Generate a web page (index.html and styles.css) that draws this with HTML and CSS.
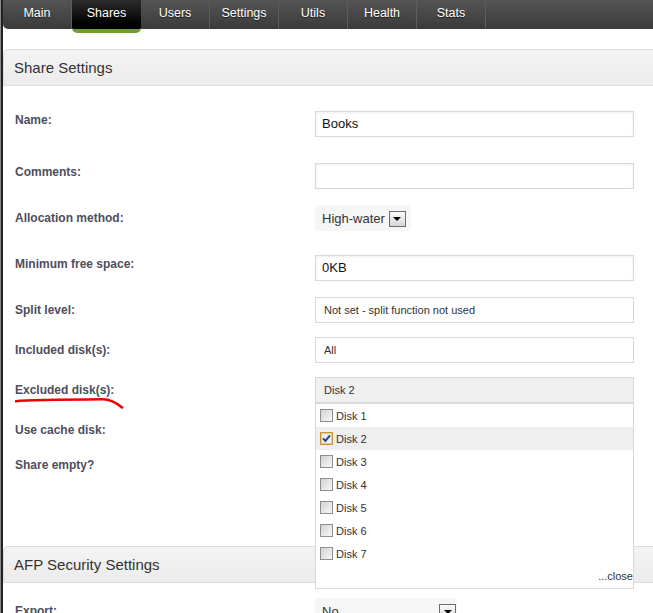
FILE: index.html
```html
<!DOCTYPE html>
<html lang="en">
<head>
<meta charset="utf-8">
<title>Share Settings</title>
<link rel="stylesheet" href="styles.css">
</head>
<body>
<nav class="nav">
  <a class="tab first">Main</a>
  <a class="tab active">Shares</a>
  <a class="tab">Users</a>
  <a class="tab">Settings</a>
  <a class="tab">Utils</a>
  <a class="tab">Health</a>
  <a class="tab">Stats</a>
</nav>

<section class="panel panel-first">
  <div class="panel-head">Share Settings</div>
  <div class="panel-body body-share">
    <div class="row row-name">
      <div class="lbl lbl-text">Name:</div>
      <div class="ctl"><div class="input">Books</div></div>
    </div>
    <div class="row row-comments">
      <div class="lbl lbl-text">Comments:</div>
      <div class="ctl"><div class="input"></div></div>
    </div>
    <div class="row row-alloc">
      <div class="lbl">Allocation method:</div>
      <div class="ctl"><div class="select"><span>High-water</span><span class="select-btn"></span></div></div>
    </div>
    <div class="row row-min">
      <div class="lbl lbl-text">Minimum free space:</div>
      <div class="ctl"><div class="input">0KB</div></div>
    </div>
    <div class="row">
      <div class="lbl">Split level:</div>
      <div class="ctl"><div class="pick">Not set - split function not used</div></div>
    </div>
    <div class="row">
      <div class="lbl">Included disk(s):</div>
      <div class="ctl"><div class="pick">All</div></div>
    </div>
    <div class="row">
      <div class="lbl">Excluded disk(s):
        <svg class="scribble" width="112" height="16" viewBox="0 0 112 16">
          <path d="M1 6.2 C 12 5, 40 4.6, 88 4.3 C 96 4.3, 101 7.5, 107 12.5" fill="none" stroke="#ee0000" stroke-width="2.6" stroke-linecap="round"/>
        </svg>
      </div>
      <div class="ctl">
        <div class="dropdown">
          <div class="dd-head">Disk 2</div>
          <div class="dd-list">
            <div class="dd-item"><span class="cb"></span><span>Disk 1</span></div>
            <div class="dd-item on"><span class="cb checked"><svg width="9" height="9" viewBox="0 0 9 9"><path d="M1 4.4 L3.4 7 L8 1.3" fill="none" stroke="#23409c" stroke-width="2"/></svg></span><span>Disk 2</span></div>
            <div class="dd-item"><span class="cb"></span><span>Disk 3</span></div>
            <div class="dd-item"><span class="cb"></span><span>Disk 4</span></div>
            <div class="dd-item"><span class="cb"></span><span>Disk 5</span></div>
            <div class="dd-item"><span class="cb"></span><span>Disk 6</span></div>
            <div class="dd-item"><span class="cb"></span><span>Disk 7</span></div>
            <div class="dd-close">...close</div>
          </div>
        </div>
      </div>
    </div>
    <div class="row row-cache">
      <div class="lbl">Use cache disk:</div>
      <div class="ctl"></div>
    </div>
    <div class="row row-empty">
      <div class="lbl">Share empty?</div>
      <div class="ctl"></div>
    </div>
  </div>
</section>

<section class="panel">
  <div class="panel-head">AFP Security Settings</div>
  <div class="panel-body body-afp">
    <div class="row">
      <div class="lbl">Export:</div>
      <div class="ctl"><div class="select select-wide"><span>No</span><span class="select-btn"></span></div></div>
    </div>
  </div>
</section>
</body>
</html>
```
FILE: styles.css
```css
* {
  box-sizing: border-box;
  margin: 0;
  padding: 0;
}

html {
  height: 100%;
  background: #fff;
  border-left: 1px solid #8a8a8a;
}

body {
  min-height: 100%;
  border-left: 2px solid #222;
  font-family: Arial, "Liberation Sans", sans-serif;
  overflow: hidden;
}

/* top navigation */
.nav {
  display: flex;
  height: 29px;
  background: linear-gradient(#555, #3a3a3a);
  border-bottom-left-radius: 5px;
}

.tab {
  flex: none;
  width: 69px;
  height: 29px;
  color: #fff;
  font-size: 12.5px;
  line-height: 26px;
  text-align: center;
  text-decoration: none;
  text-shadow: 0 1px 1px rgba(0, 0, 0, 0.6);
  border-right: 1px solid #5c5c5c;
}

.tab.first {
  border-bottom-left-radius: 5px;
}

.tab.active {
  height: 33px;
  background: linear-gradient(#2c2c2c, #000 85%);
  border-right: none;
  border-bottom: 4px solid #6f9e33;
  border-radius: 0 0 5px 5px;
}

/* panels */
.panel-first {
  margin-top: 20px;
}

.panel-head {
  height: 37px;
  padding-left: 10px;
  background: linear-gradient(#f3f3f3, #ececec);
  border: 1px solid #dcdcdc;
  border-right: none;
  border-top-left-radius: 5px;
  color: #333;
  font-size: 15px;
  line-height: 35px;
}

.panel-body {
  padding-left: 12px;
}

.body-share {
  padding-top: 25px;
}

.body-afp {
  padding-top: 15px;
}

/* form rows */
.row {
  display: flex;
  align-items: flex-start;
  height: 40px;
}

.row-name { height: 52px; }
.row-comments { height: 42px; }
.row-alloc { height: 50px; }
.row-min { height: 42px; }
.row-cache { height: 35px; }
.row-empty { height: 94px; }

.lbl {
  position: relative;
  flex: none;
  width: 300px;
  padding-top: 6px;
  color: #4e4e5c;
  font-size: 12px;
  font-weight: bold;
  line-height: 14px;
}

.lbl-text {
  padding-top: 2px;
}

.scribble {
  position: absolute;
  left: 0;
  top: 18px;
}

.ctl {
  position: relative;
  flex: none;
  width: 319px;
}

.input {
  height: 26px;
  padding-left: 6px;
  background: #fff;
  border: 1px solid #d8d8d8;
  box-shadow: inset 0 1px 3px rgba(0, 0, 0, 0.07);
  color: #111;
  font-size: 13px;
  line-height: 24px;
}

.pick {
  height: 26px;
  padding-left: 8px;
  background: #fff;
  border: 1px solid #d8d8d8;
  color: #333;
  font-size: 11px;
  line-height: 24px;
}

.select {
  display: inline-flex;
  align-items: center;
  gap: 4px;
  height: 26px;
  padding: 0 5px 0 7px;
  background: #f6f6f6;
  border-radius: 4px;
  color: #333;
  font-size: 13px;
}

.select-wide {
  width: 142px;
  justify-content: space-between;
  padding-right: 1px;
}

.select-btn {
  display: flex;
  align-items: center;
  justify-content: center;
  width: 17px;
  height: 16px;
  margin-top: 2px;
  background: linear-gradient(#fbfbfb, #d6d6d6);
  border: 1px solid #6d6d6d;
}

.select-btn::before {
  content: "";
  border-left: 4px solid transparent;
  border-right: 4px solid transparent;
  border-top: 4px solid #000;
}

/* excluded disk dropdown */
.dropdown {
  position: absolute;
  top: 0;
  left: 0;
  z-index: 5;
  width: 319px;
}

.dd-head {
  height: 27px;
  padding-left: 8px;
  background: #f0f0f0;
  border: 1px solid #d8d8d8;
  border-bottom: 2px solid #d8d8d8;
  color: #333;
  font-size: 11px;
  line-height: 24px;
}

.dd-list {
  background: #fff;
  border: 1px solid #d8d8d8;
  border-top: none;
}

.dd-item {
  display: flex;
  align-items: center;
  gap: 3px;
  height: 23px;
  padding-left: 4px;
  color: #333;
  font-size: 11px;
}

.dd-item.on {
  background: #efefef;
}

.cb {
  display: flex;
  align-items: center;
  justify-content: center;
  flex: none;
  width: 13px;
  height: 13px;
  overflow: hidden;
  background: linear-gradient(135deg, #d2d2d2, #f8f8f8);
  border: 1px solid #8c8d8d;
}

.cb.checked {
  background: linear-gradient(135deg, #e6e6e6, #fdfdfd);
  border-color: #c7953f;
  box-shadow: inset 0 0 0 1px #f4c570;
}

.dd-close {
  height: 23px;
  color: #333;
  font-size: 11px;
  line-height: 23px;
  text-align: right;
}
```
